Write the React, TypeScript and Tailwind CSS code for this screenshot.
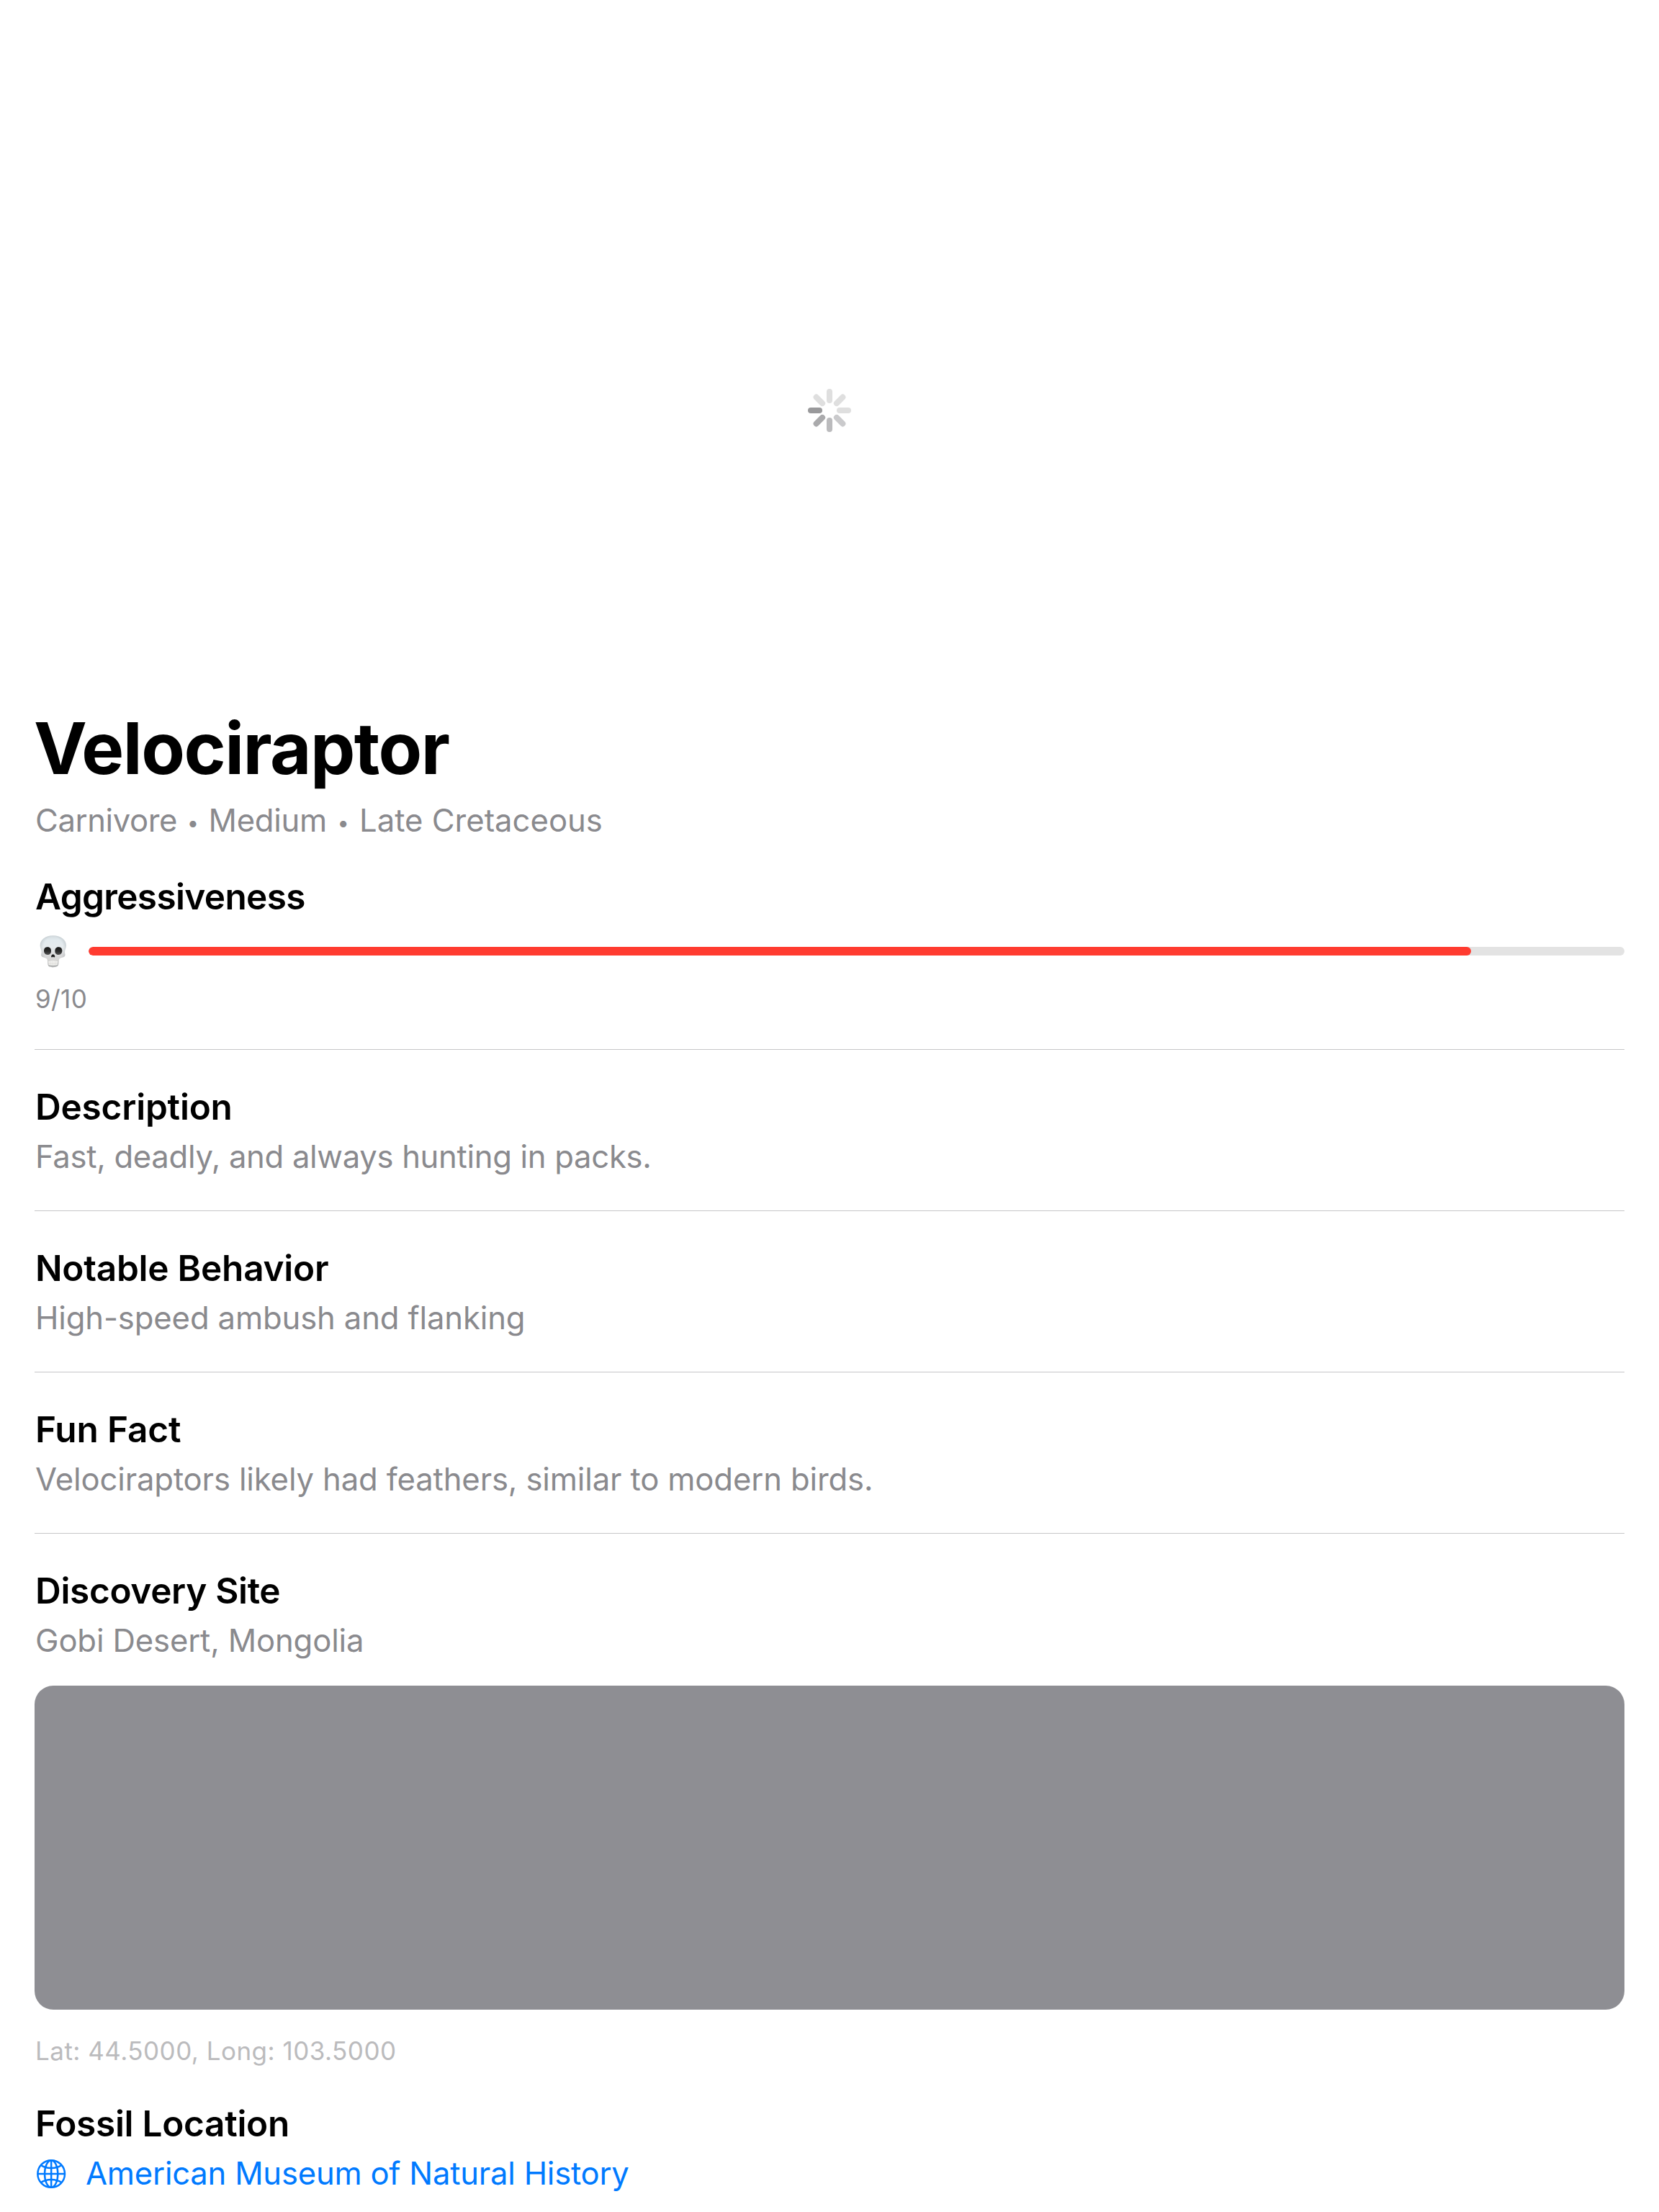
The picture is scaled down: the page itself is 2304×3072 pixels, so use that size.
import type { ReactNode } from "react";

const SPOKES = [
  { angle: 0, color: "#dfdfdf" },
  { angle: 45, color: "#dfdfdf" },
  { angle: 90, color: "#dfdfdf" },
  { angle: 135, color: "#cacacc" },
  { angle: 180, color: "#bbbbbd" },
  { angle: 225, color: "#aaaaac" },
  { angle: 270, color: "#99999b" },
  { angle: 315, color: "#dfdfdf" },
];

function Spinner() {
  return (
    <svg viewBox="-30 -30 60 60" className="h-[60px] w-[60px]" role="img" aria-label="Loading">
      {SPOKES.map((s) => (
        <rect key={s.angle} x={-4} y={-30} width={8} height={20} rx={4} fill={s.color} transform={`rotate(${s.angle})`} />
      ))}
    </svg>
  );
}

const SKULL_OUTLINE =
  "M131 56C99 56 77 73 77 98C77 108 82 114 83 124C83 133 79 137 84 143C89 149 104 147 107 156C109 164 108 172 110 179C112 186 121 188 131 188C141 188 150 186 153 179C155 172 154 164 156 156C159 147 174 149 179 143C184 137 180 133 180 124C181 114 186 108 186 98C186 73 163 56 131 56Z";

function Skull() {
  return (
    <svg viewBox="72 52 120 141" className="h-[47px] w-[40px] shrink-0" role="img" aria-label="Skull">
      <defs>
        <linearGradient id="bone" x1="0" y1="0" x2="0" y2="1">
          <stop offset="0" stopColor="#d3dade" />
          <stop offset="0.14" stopColor="#e2eaee" />
          <stop offset="0.35" stopColor="#e6ebee" />
          <stop offset="0.6" stopColor="#dadadb" />
          <stop offset="0.85" stopColor="#d5d4d2" />
          <stop offset="1" stopColor="#c3c1bd" />
        </linearGradient>
        <radialGradient id="shade" cx="0.5" cy="0.42" r="0.58">
          <stop offset="0.65" stopColor="#8f979b" stopOpacity="0" />
          <stop offset="1" stopColor="#8f979b" stopOpacity="0.45" />
        </radialGradient>
        <linearGradient id="socket" x1="0" y1="0" x2="0" y2="1">
          <stop offset="0" stopColor="#161616" />
          <stop offset="0.6" stopColor="#303030" />
          <stop offset="1" stopColor="#555555" />
        </linearGradient>
      </defs>
      <path d={SKULL_OUTLINE} fill="url(#bone)" />
      <path d={SKULL_OUTLINE} fill="url(#shade)" />
      <path d="M93 119C93 108 101 104 109 104C118 104 123 111 123 120C123 131 117 136 108 136C98 136 93 129 93 119Z" fill="url(#socket)" />
      <path d="M169 119C169 108 161 104 153 104C144 104 139 111 139 120C139 131 145 136 154 136C164 136 169 129 169 119Z" fill="url(#socket)" />
      <path d="M131 134C126 134 123 141 123 144C124 147 128 147 131 144C134 147 138 147 139 144C139 141 136 134 131 134Z" fill="#1e1e1e" />
      <path d="M112 163Q131 158 150 163L149 178Q131 183 113 178Z" fill="#f6f6f4" />
      <path d="M119 162V179M127 161V181M135 161V181M143 162V179M112 171Q131 173 150 171" stroke="#c8c6c2" strokeWidth="1.4" fill="none" />
    </svg>
  );
}

function Globe() {
  return (
    <svg viewBox="60 53 126 126" className="h-[42px] w-[42px] shrink-0" fill="none" stroke="#007aff" strokeWidth="7.5" aria-hidden="true">
      <circle cx="123.5" cy="116" r="56.5" />
      <ellipse cx="123.5" cy="116" rx="27.5" ry="56.5" />
      <path d="M123.5 59V173M66.5 116H180.5" />
      <path d="M80 79C92 88 107 92 123.5 92S155 88 167 79M80 153C92 144 107 140 123.5 140S155 144 167 153" />
    </svg>
  );
}

function Divider() {
  return <div className="h-px bg-[#c6c6c8]" />;
}

function Dot({ className }: { className: string }) {
  return <span className={`relative top-[3px] text-center text-[29px] ${className}`}>•</span>;
}

function Heading({ className, children }: { className: string; children: ReactNode }) {
  return <h2 className={`pl-px text-[49.5px] leading-[60px] font-semibold text-black ${className}`}>{children}</h2>;
}

const SECTIONS = [
  { title: "Description", titleClass: "tracking-[-0.2px]", body: "Fast, deadly, and always hunting in packs.", bodyClass: "tracking-[-0.3px]" },
  { title: "Notable Behavior", titleClass: "tracking-[-0.23px]", body: "High-speed ambush and flanking", bodyClass: "tracking-[-0.13px]" },
  { title: "Fun Fact", titleClass: "tracking-[-0.13px]", body: "Velociraptors likely had feathers, similar to modern birds.", bodyClass: "tracking-[-0.125px]" },
];

export default function App() {
  const level = 9;
  return (
    <main className="flex h-[3072px] w-[2304px] flex-col overflow-hidden bg-white font-['Inter',sans-serif]">
      <div className="flex h-[979px] shrink-0 items-start justify-center pt-[540px]">
        <Spinner />
      </div>
      <div className="flex flex-col px-12">
        <h1 className="-ml-px text-[99px] leading-[120px] font-bold tracking-[-1.5px] text-black">Velociraptor</h1>
        <p className="mt-[14px] flex pl-px text-[43.6px] leading-[54px] text-[#8a8a8e]">
          <span className="tracking-[-0.4px]">Carnivore</span>
          <Dot className="w-[43.5px]" />
          <span className="tracking-[-0.25px]">Medium</span>
          <Dot className="w-[45px]" />
          <span>Late Cretaceous</span>
        </p>

        <Heading className="mt-[48px] tracking-[-0.63px]">Aggressiveness</Heading>
        <div className="mt-[19px] flex h-[54px] items-center gap-6">
          <div className="flex w-[51px] shrink-0 pl-1.5">
            <Skull />
          </div>
          <div className="h-3 flex-1 overflow-hidden rounded-full bg-[#e3e3e3]">
            <div className="h-full rounded-full bg-[#ff3b30]" style={{ width: `${level * 10}%` }} />
          </div>
        </div>
        <p className="mt-[18px] pl-px text-[35px] leading-[42px] tracking-[0.4px] text-[#8a8a8e]">{level}/10</p>

        <div className="mt-[49px] flex flex-col">
          {SECTIONS.map((s) => (
            <section key={s.title} className="flex flex-col pb-[47px]">
              <Divider />
              <Heading className={`mt-[49px] ${s.titleClass}`}>{s.title}</Heading>
              <p className={`mt-[13px] pl-px text-[43.6px] leading-[54px] text-[#8a8a8e] ${s.bodyClass}`}>{s.body}</p>
            </section>
          ))}
        </div>

        <section className="flex flex-col">
          <Divider />
          <Heading className="mt-[49px] tracking-[-0.32px]">Discovery Site</Heading>
          <p className="mt-[13px] pl-px text-[43.6px] leading-[54px] tracking-[-0.145px] text-[#8a8a8e]">Gobi Desert, Mongolia</p>
          <div className="mt-[35px] h-[450px] rounded-[26px] bg-[#8e8e93]" />
          <p className="mt-9 pl-px text-[35px] leading-[42px] tracking-[0.48px] text-[#bbbbbd]">Lat: 44.5000, Long: 103.5000</p>
        </section>

        <section className="mt-[50px] flex flex-col">
          <Heading className="tracking-[-0.28px]">Fossil Location</Heading>
          <a className="mt-[13px] flex items-center pl-0.5 text-[43.6px] leading-[54px] tracking-[-0.22px] text-[#007aff]">
            <Globe />
            <span className="ml-[27px]">American Museum of Natural History</span>
          </a>
        </section>
      </div>
    </main>
  );
}
